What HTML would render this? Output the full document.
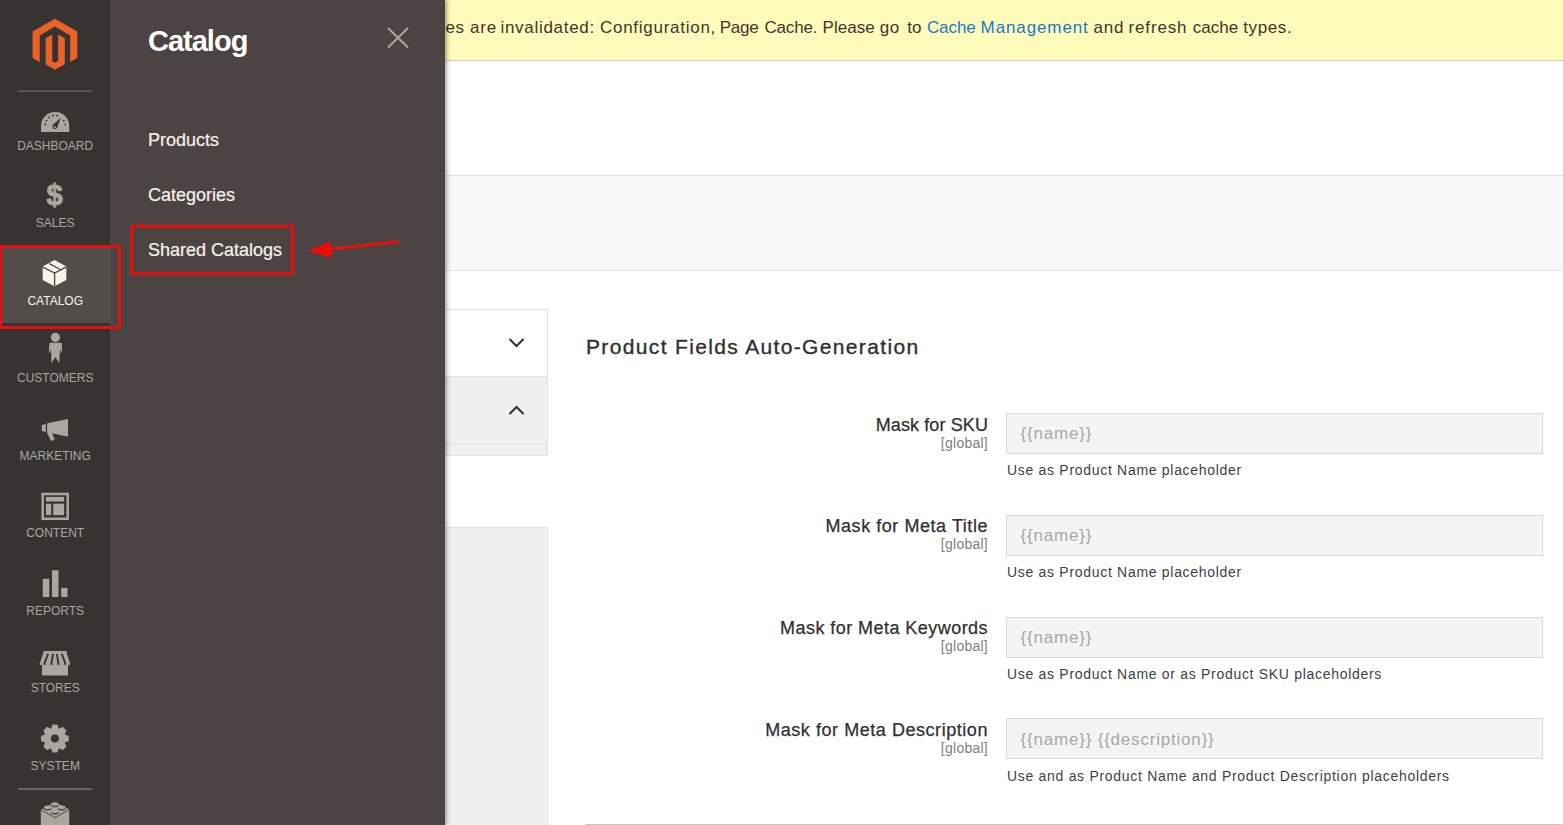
<!DOCTYPE html>
<html><head><meta charset="utf-8"><title>Magento Admin</title>
<style>
html,body{margin:0;padding:0;width:1563px;height:825px;overflow:hidden;background:#fff;}
body{position:relative;font-family:"Liberation Sans",sans-serif;}
.t{position:absolute;white-space:nowrap;}
.r{position:absolute;box-sizing:border-box;}
svg{position:absolute;overflow:visible;}
</style></head><body>
<div class="r" style="left:445px;top:0px;width:1118px;height:61px;background:#fffbbb;border-bottom:1px solid #d2d0b4;"></div>
<div class="t" style="right:1098.5px;text-align:right;top:19.21px;font-size:17px;line-height:17px;color:#41362f;font-weight:400;letter-spacing:0.5px;">One or more of the Cache Types</div>
<div class="t" style="left:470.1px;top:19.21px;font-size:17px;line-height:17px;color:#41362f;font-weight:400;letter-spacing:0.742px;">are</div>
<div class="t" style="left:500.4px;top:19.21px;font-size:17px;line-height:17px;color:#41362f;font-weight:400;letter-spacing:0.711px;">invalidated:</div>
<div class="t" style="left:600px;top:19.21px;font-size:17px;line-height:17px;color:#41362f;font-weight:400;letter-spacing:0.729px;">Configuration,</div>
<div class="t" style="left:719.7px;top:19.21px;font-size:17px;line-height:17px;color:#41362f;font-weight:400;letter-spacing:-0.216px;">Page</div>
<div class="t" style="left:764.5px;top:19.21px;font-size:17px;line-height:17px;color:#41362f;font-weight:400;letter-spacing:-0.188px;">Cache.</div>
<div class="t" style="left:822.6px;top:19.21px;font-size:17px;line-height:17px;color:#41362f;font-weight:400;letter-spacing:0.035px;">Please</div>
<div class="t" style="left:879.7px;top:19.21px;font-size:17px;line-height:17px;color:#41362f;font-weight:400;letter-spacing:0.645px;">go</div>
<div class="t" style="left:907.3px;top:19.21px;font-size:17px;line-height:17px;color:#41362f;font-weight:400;letter-spacing:0.077px;">to</div>
<div class="t" style="left:926.9px;top:19.21px;font-size:17px;line-height:17px;color:#1979c3;font-weight:400;letter-spacing:-0.072px;">Cache</div>
<div class="t" style="left:980.6px;top:19.21px;font-size:17px;line-height:17px;color:#1979c3;font-weight:400;letter-spacing:0.888px;">Management</div>
<div class="t" style="left:1093.4px;top:19.21px;font-size:17px;line-height:17px;color:#41362f;font-weight:400;letter-spacing:0.795px;">and</div>
<div class="t" style="left:1128.6px;top:19.21px;font-size:17px;line-height:17px;color:#41362f;font-weight:400;letter-spacing:0.824px;">refresh</div>
<div class="t" style="left:1192.8px;top:19.21px;font-size:17px;line-height:17px;color:#41362f;font-weight:400;letter-spacing:0.023px;">cache</div>
<div class="t" style="left:1243.2px;top:19.21px;font-size:17px;line-height:17px;color:#41362f;font-weight:400;letter-spacing:0.614px;">types.</div>
<div class="r" style="left:445px;top:175px;width:1118px;height:96px;background:#f8f8f8;border-top:1px solid #e3e3e3;border-bottom:1px solid #e3e3e3;"></div>
<div class="r" style="left:400px;top:309px;width:148px;height:68px;background:#fff;border:1px solid #e3e3e3;"></div>
<div class="r" style="left:400px;top:376px;width:148px;height:68px;background:#f0f0f0;border:1px solid #e3e3e3;"></div>
<div class="r" style="left:400px;top:443px;width:148px;height:13px;background:#f1f1f1;border:1px solid #e3e3e3;"></div>
<div class="r" style="left:400px;top:527px;width:148px;height:320px;background:#f0f0f0;border:1px solid #e3e3e3;"></div>
<svg style="left:0;top:0" width="1563" height="825" viewBox="0 0 1563 825"><polyline points="509.5,339 516.5,346 523.5,339" fill="none" stroke="#303030" stroke-width="2"/><polyline points="509.5,414 516.5,407 523.5,414" fill="none" stroke="#303030" stroke-width="2"/></svg>
<div class="t" style="left:586px;top:336.02px;font-size:21px;line-height:21px;color:#303030;font-weight:400;letter-spacing:1.35px;-webkit-text-stroke:0.35px #303030;">Product Fields Auto-Generation</div>
<div class="t" style="right:575px;text-align:right;top:415.76px;font-size:18px;line-height:18px;color:#303030;font-weight:400;letter-spacing:0.1px;-webkit-text-stroke:0.25px #303030;">Mask for SKU</div>
<div class="t" style="right:575px;text-align:right;top:435.75px;font-size:14px;line-height:14px;color:#808080;font-weight:400;letter-spacing:0.25px;">[global]</div>
<div class="r" style="left:1006px;top:413px;width:537px;height:41px;background:#f4f4f4;border:1px solid #d9d9d9;"></div>
<div class="t" style="left:1020.5px;top:425.41px;font-size:17px;line-height:17px;color:#a8a8a8;font-weight:400;letter-spacing:0.8px;">{{name}}</div>
<div class="t" style="left:1007px;top:463.45px;font-size:14px;line-height:14px;color:#3f3f3f;font-weight:400;letter-spacing:0.7px;">Use as Product Name placeholder</div>
<div class="t" style="right:575px;text-align:right;top:517.46px;font-size:18px;line-height:18px;color:#303030;font-weight:400;letter-spacing:0.55px;-webkit-text-stroke:0.25px #303030;">Mask for Meta Title</div>
<div class="t" style="right:575px;text-align:right;top:537.45px;font-size:14px;line-height:14px;color:#808080;font-weight:400;letter-spacing:0.25px;">[global]</div>
<div class="r" style="left:1006px;top:515px;width:537px;height:41px;background:#f4f4f4;border:1px solid #d9d9d9;"></div>
<div class="t" style="left:1020.5px;top:527.11px;font-size:17px;line-height:17px;color:#a8a8a8;font-weight:400;letter-spacing:0.8px;">{{name}}</div>
<div class="t" style="left:1007px;top:565.15px;font-size:14px;line-height:14px;color:#3f3f3f;font-weight:400;letter-spacing:0.7px;">Use as Product Name placeholder</div>
<div class="t" style="right:575px;text-align:right;top:619.16px;font-size:18px;line-height:18px;color:#303030;font-weight:400;letter-spacing:0.45px;-webkit-text-stroke:0.25px #303030;">Mask for Meta Keywords</div>
<div class="t" style="right:575px;text-align:right;top:639.15px;font-size:14px;line-height:14px;color:#808080;font-weight:400;letter-spacing:0.25px;">[global]</div>
<div class="r" style="left:1006px;top:617px;width:537px;height:41px;background:#f4f4f4;border:1px solid #d9d9d9;"></div>
<div class="t" style="left:1020.5px;top:628.81px;font-size:17px;line-height:17px;color:#a8a8a8;font-weight:400;letter-spacing:0.8px;">{{name}}</div>
<div class="t" style="left:1007px;top:666.85px;font-size:14px;line-height:14px;color:#3f3f3f;font-weight:400;letter-spacing:0.7px;">Use as Product Name or as Product SKU placeholders</div>
<div class="t" style="right:575px;text-align:right;top:720.86px;font-size:18px;line-height:18px;color:#303030;font-weight:400;letter-spacing:0.55px;-webkit-text-stroke:0.25px #303030;">Mask for Meta Description</div>
<div class="t" style="right:575px;text-align:right;top:740.85px;font-size:14px;line-height:14px;color:#808080;font-weight:400;letter-spacing:0.25px;">[global]</div>
<div class="r" style="left:1006px;top:718px;width:537px;height:41px;background:#f4f4f4;border:1px solid #d9d9d9;"></div>
<div class="t" style="left:1020.5px;top:730.51px;font-size:17px;line-height:17px;color:#a8a8a8;font-weight:400;letter-spacing:0.8px;">{{name}} {{description}}</div>
<div class="t" style="left:1007px;top:768.55px;font-size:14px;line-height:14px;color:#3f3f3f;font-weight:400;letter-spacing:0.7px;">Use and as Product Name and Product Description placeholders</div>
<div class="r" style="left:585px;top:824px;width:978px;height:1px;background:#c8c8c8;"></div>
<div class="r" style="left:110px;top:0px;width:335px;height:825px;background:#4c4442;box-shadow:2px 0 4px rgba(0,0,0,0.35);"></div>
<div class="r" style="left:110px;top:0px;width:2.5px;height:825px;background:#4a4744;"></div>
<div class="t" style="left:148px;top:26.55px;font-size:29px;line-height:29px;color:#ffffff;font-weight:700;letter-spacing:-1.0px;">Catalog</div>
<svg style="left:0;top:0" width="1563" height="825" viewBox="0 0 1563 825"><path d="M388 28 L408 47.5 M408 28 L388 47.5" stroke="#aca6a0" stroke-width="2" fill="none"/></svg>
<div class="t" style="left:148px;top:130.66px;font-size:18px;line-height:18px;color:#f7f3eb;font-weight:400;letter-spacing:0px;-webkit-text-stroke:0.2px #f7f3eb;">Products</div>
<div class="t" style="left:148px;top:185.66px;font-size:18px;line-height:18px;color:#f7f3eb;font-weight:400;letter-spacing:0px;-webkit-text-stroke:0.2px #f7f3eb;">Categories</div>
<div class="t" style="left:148px;top:240.66px;font-size:18px;line-height:18px;color:#f7f3eb;font-weight:400;letter-spacing:0px;-webkit-text-stroke:0.2px #f7f3eb;">Shared Catalogs</div>
<div class="r" style="left:0px;top:0px;width:110px;height:825px;background:#373330;"></div>
<div class="r" style="left:0px;top:246px;width:110px;height:77px;background:#524d49;"></div>
<svg style="left:0;top:0" width="110" height="825" viewBox="0 0 110 825"><g transform="translate(32.6,18.7)" fill="#eb6126"><path d="M22.3 0 L44.7 12.9 L44.7 39.3 L37.6 43.4 L37.6 16.9 L22.3 7.9 L7.1 16.9 L7.1 43.4 L0 39.3 L0 12.9 Z"/><path d="M13 19.5 L19.6 15.7 L19.6 42.4 L22.3 44 L25.6 42.4 L25.6 15.7 L32.2 19.5 L32.2 45.5 L22.3 51 L13 45.5 Z"/></g><rect x="18" y="90.5" width="74" height="1.2" fill="#6d6863"/><rect x="18" y="788.3" width="74" height="1.6" fill="#77716c"/></svg>
<div class="t" style="left:-244.8px;width:600px;text-align:center;top:139.94px;font-size:12px;line-height:12px;color:#aaa6a0;font-weight:400;letter-spacing:0px;">DASHBOARD</div>
<div class="t" style="left:-244.8px;width:600px;text-align:center;top:217.40px;font-size:12px;line-height:12px;color:#aaa6a0;font-weight:400;letter-spacing:0px;">SALES</div>
<div class="t" style="left:-244.8px;width:600px;text-align:center;top:294.86px;font-size:12px;line-height:12px;color:#f7f3eb;font-weight:400;letter-spacing:0px;">CATALOG</div>
<div class="t" style="left:-244.8px;width:600px;text-align:center;top:372.32px;font-size:12px;line-height:12px;color:#aaa6a0;font-weight:400;letter-spacing:0px;">CUSTOMERS</div>
<div class="t" style="left:-244.8px;width:600px;text-align:center;top:449.78px;font-size:12px;line-height:12px;color:#aaa6a0;font-weight:400;letter-spacing:0px;">MARKETING</div>
<div class="t" style="left:-244.8px;width:600px;text-align:center;top:527.24px;font-size:12px;line-height:12px;color:#aaa6a0;font-weight:400;letter-spacing:0px;">CONTENT</div>
<div class="t" style="left:-244.8px;width:600px;text-align:center;top:604.70px;font-size:12px;line-height:12px;color:#aaa6a0;font-weight:400;letter-spacing:0px;">REPORTS</div>
<div class="t" style="left:-244.8px;width:600px;text-align:center;top:682.16px;font-size:12px;line-height:12px;color:#aaa6a0;font-weight:400;letter-spacing:0px;">STORES</div>
<div class="t" style="left:-244.8px;width:600px;text-align:center;top:759.62px;font-size:12px;line-height:12px;color:#aaa6a0;font-weight:400;letter-spacing:0px;">SYSTEM</div>
<svg style="left:0;top:0" width="110" height="825" viewBox="0 0 110 825">
<!-- dashboard -->
<path d="M41 132 L41 126 A14.1 14.1 0 0 1 69.2 126 L69.2 132 Z" fill="#aaa6a0"/>
<g fill="#373330"><circle cx="45.2" cy="124.4" r="0.9"/><circle cx="46.4" cy="120.7" r="0.9"/><circle cx="49.2" cy="117.5" r="0.9"/><circle cx="52.9" cy="115.5" r="0.9"/><circle cx="57.2" cy="115.5" r="0.9"/><circle cx="63.8" cy="120.7" r="0.9"/><circle cx="65.2" cy="124.6" r="0.9"/>
<path d="M52.4 125.3 L60.7 117.8 L57 128 Z"/><circle cx="54.8" cy="126.8" r="2.3"/></g>
<circle cx="54.8" cy="126.9" r="1" fill="#aaa6a0"/>
<!-- sales -->
<text x="54.5" y="205" font-family="Liberation Sans" font-weight="700" font-size="29" text-anchor="middle" fill="#aaa6a0" stroke="#aaa6a0" stroke-width="0.9">$</text>
<!-- catalog box -->
<path d="M54.5 260 L66.3 266.6 L66.3 280 L54.5 286.3 L42.7 280 L42.7 266.6 Z" fill="#f7f3eb"/>
<path d="M43 267.2 L54.6 273 L66 267.2 M54.6 273 L54.6 286.3 M49.3 263.6 L60.3 269.5" stroke="#4a4541" stroke-width="1.3" fill="none"/>
<!-- customers -->
<circle cx="55.4" cy="337.4" r="4.6" fill="#aaa6a0"/>
<path d="M49.3 344 Q49.3 342.7 50.6 342.7 L60.6 342.7 Q61.9 342.7 61.9 344 L62 353.6 L60.1 349.5 L59.2 363.3 L55.4 357 L51.5 363.3 L50.9 349.5 L48.8 353.6 Z" fill="#aaa6a0"/>
<!-- marketing -->
<path d="M47.1 423.3 L68 419 L68 436.7 L52.2 433.3 L54.6 439.6 L51 441 L47.1 432.8 Z" fill="#aaa6a0"/>
<path d="M41.8 425 L45.9 424 L45.9 432 L41.8 431 Z" fill="#aaa6a0"/>
<!-- content -->
<rect x="42.7" y="494" width="25" height="24.8" fill="none" stroke="#aaa6a0" stroke-width="2.5"/>
<rect x="45.9" y="496.9" width="18.2" height="4.6" fill="#aaa6a0"/>
<rect x="45.9" y="503.7" width="5.3" height="11.4" fill="#aaa6a0"/>
<rect x="53.2" y="503.7" width="10.9" height="11.4" fill="#aaa6a0"/>
<!-- reports -->
<rect x="42.8" y="578.8" width="6.5" height="18.2" fill="#aaa6a0"/>
<rect x="52" y="570.3" width="6.5" height="26.7" fill="#aaa6a0"/>
<rect x="61.2" y="587.8" width="6.3" height="9.2" fill="#aaa6a0"/>
<!-- stores -->
<path d="M43.5 651 L66.5 651 L66.8 653.2 L69.9 663.2 L39.8 663.2 L43.2 653.2 Z" fill="#aaa6a0"/>
<g fill="#aaa6a0"><circle cx="41.6" cy="663.4" r="1.9"/><circle cx="47.9" cy="663.6" r="2.2"/><circle cx="54.9" cy="663.6" r="2.3"/><circle cx="61.8" cy="663.6" r="2.2"/><circle cx="68.1" cy="663.4" r="1.9"/></g>
<g stroke="#373330" stroke-width="1.9" stroke-linecap="round"><path d="M47.8 654.6 L44.6 663"/><path d="M52.9 654.6 L51.4 663.2"/><path d="M57 654.6 L58.3 663.2"/><path d="M62.1 654.6 L65.2 663"/></g>
<rect x="42" y="664.6" width="26" height="10.9" fill="#aaa6a0"/>
<!-- system gear -->
<g transform="translate(54.9,738.5)" fill="#aaa6a0">
<circle r="10.3"/>
<path d="M-3.6 -9 L-2.1 -13.3 L2.1 -13.3 L3.6 -9 Z" stroke="#aaa6a0" stroke-width="1.2" stroke-linejoin="round" transform="rotate(0)"/><path d="M-3.6 -9 L-2.1 -13.3 L2.1 -13.3 L3.6 -9 Z" stroke="#aaa6a0" stroke-width="1.2" stroke-linejoin="round" transform="rotate(45)"/><path d="M-3.6 -9 L-2.1 -13.3 L2.1 -13.3 L3.6 -9 Z" stroke="#aaa6a0" stroke-width="1.2" stroke-linejoin="round" transform="rotate(90)"/><path d="M-3.6 -9 L-2.1 -13.3 L2.1 -13.3 L3.6 -9 Z" stroke="#aaa6a0" stroke-width="1.2" stroke-linejoin="round" transform="rotate(135)"/><path d="M-3.6 -9 L-2.1 -13.3 L2.1 -13.3 L3.6 -9 Z" stroke="#aaa6a0" stroke-width="1.2" stroke-linejoin="round" transform="rotate(180)"/><path d="M-3.6 -9 L-2.1 -13.3 L2.1 -13.3 L3.6 -9 Z" stroke="#aaa6a0" stroke-width="1.2" stroke-linejoin="round" transform="rotate(225)"/><path d="M-3.6 -9 L-2.1 -13.3 L2.1 -13.3 L3.6 -9 Z" stroke="#aaa6a0" stroke-width="1.2" stroke-linejoin="round" transform="rotate(270)"/><path d="M-3.6 -9 L-2.1 -13.3 L2.1 -13.3 L3.6 -9 Z" stroke="#aaa6a0" stroke-width="1.2" stroke-linejoin="round" transform="rotate(315)"/>
</g>
<circle cx="54.9" cy="738.5" r="4" fill="#373330"/>
<!-- lego -->
<path d="M40.8 809.9 L55 802.3 L69.2 809.6 L69.2 825 L40.8 825 Z" fill="#aaa6a0"/>
<path d="M40.8 809.9 L55 817.6 L69.2 809.6" stroke="#4f4b47" stroke-width="1" fill="none"/>
<path d="M55 818 L55 825" stroke="#9a958f" stroke-width="1" fill="none"/>
<g><ellipse cx="54.8" cy="805.3" rx="3.8" ry="2" fill="#4d4945"/><ellipse cx="54.8" cy="804" rx="3.7" ry="1.8" fill="#aaa6a0"/>
<ellipse cx="47.7" cy="808.6" rx="3.8" ry="2" fill="#4d4945"/><ellipse cx="47.7" cy="807.3" rx="3.7" ry="1.8" fill="#aaa6a0"/>
<ellipse cx="61.8" cy="808.6" rx="3.8" ry="2" fill="#4d4945"/><ellipse cx="61.8" cy="807.3" rx="3.7" ry="1.8" fill="#aaa6a0"/>
<ellipse cx="54.8" cy="812.6" rx="3.8" ry="2" fill="#4d4945"/><ellipse cx="54.8" cy="811.3" rx="3.7" ry="1.8" fill="#aaa6a0"/></g>
</svg>
<div class="r" style="left:-1px;top:245px;width:122px;height:84px;border:3px solid #e60f0f;border-radius:2px;"></div>
<div class="r" style="left:130px;top:225px;width:164px;height:50px;border:3px solid #e60f0f;border-radius:2px;"></div>
<svg style="left:0;top:0" width="1563" height="825" viewBox="0 0 1563 825"><path d="M309 251.4 L330 242.2 L331.7 256.7 Z" fill="#f20a0a" stroke="#f20a0a" stroke-width="1" stroke-linejoin="round"/><path d="M328 249.3 L397.5 241.8" stroke="#ec0f0f" stroke-width="3" stroke-linecap="round"/></svg>
</body></html>
